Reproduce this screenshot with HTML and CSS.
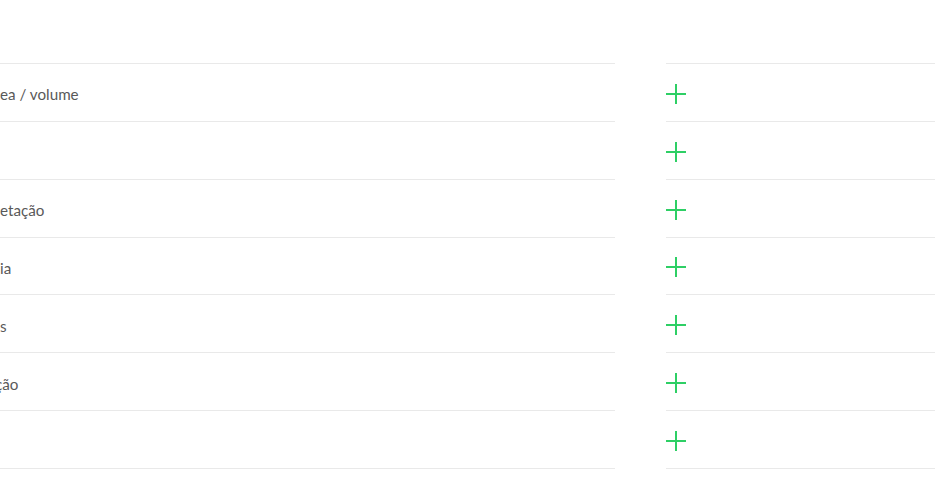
FILE: index.html
```html
<!DOCTYPE html>
<html lang="pt">
<head>
<meta charset="utf-8">
<link rel="stylesheet" href="styles.css">
</head>
<body>
<div class="page">
  <div class="col col-left">
    <div class="row"><span class="label">ea / volume</span></div>
    <div class="row"><span class="label"></span></div>
    <div class="row"><span class="label">etação</span></div>
    <div class="row"><span class="label">ia</span></div>
    <div class="row"><span class="label">s</span></div>
    <div class="row"><span class="label clipped">ção</span></div>
    <div class="row"><span class="label"></span></div>
  </div>
  <div class="col col-right">
    <div class="row"><svg class="plus" viewBox="0 0 20 20"><path d="M10 0V20M0 10H20"/></svg></div>
    <div class="row"><svg class="plus" viewBox="0 0 20 20"><path d="M10 0V20M0 10H20"/></svg></div>
    <div class="row"><svg class="plus" viewBox="0 0 20 20"><path d="M10 0V20M0 10H20"/></svg></div>
    <div class="row"><svg class="plus" viewBox="0 0 20 20"><path d="M10 0V20M0 10H20"/></svg></div>
    <div class="row"><svg class="plus" viewBox="0 0 20 20"><path d="M10 0V20M0 10H20"/></svg></div>
    <div class="row"><svg class="plus" viewBox="0 0 20 20"><path d="M10 0V20M0 10H20"/></svg></div>
    <div class="row"><svg class="plus" viewBox="0 0 20 20"><path d="M10 0V20M0 10H20"/></svg></div>
  </div>
</div>
</body>
</html>
```
FILE: styles.css
```css
html, body {
  margin: 0;
  padding: 0;
  background: #fff;
}
body {
  font-family: Lato, "Liberation Sans", sans-serif;
  font-size: 15.2px;
  color: #595959;
  overflow: hidden;
}
.page {
  display: flex;
  gap: 51px;
  padding-top: 63px;
}
.col-left {
  width: 615px;
  flex: none;
}
.col-right {
  flex: 1;
}
.row {
  height: 56.857px;
  border-top: 1px solid #e9e9e9;
  display: flex;
  align-items: center;
  overflow: hidden;
}
.col .row:last-child {
  border-bottom: 1px solid #e9e9e9;
}
.label {
  white-space: nowrap;
  line-height: 20px;
  padding-top: 4px;
}
.clipped {
  margin-left: -5px;
}
.plus {
  width: 20px;
  height: 20px;
  margin-top: 3px;
  stroke: #2ecf65;
  stroke-width: 2;
  fill: none;
}
```
